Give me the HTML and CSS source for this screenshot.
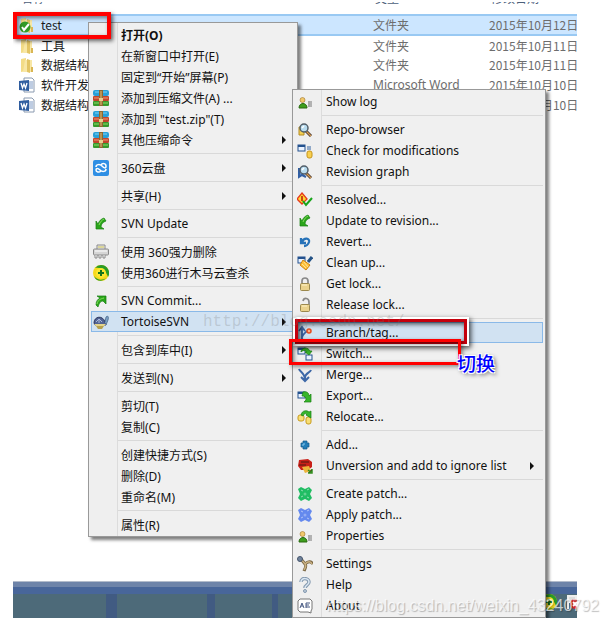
FILE: index.html
```
<!DOCTYPE html>
<html lang="zh-CN">
  <head>
    <meta charset="utf-8">
    <title>TortoiseSVN</title>
    <link rel="stylesheet" href="styles.css">
  </head>
  <body>
    <!-- shared icons -->
    <svg class="sprite" aria-hidden="true">
      <symbol id="folder" viewBox="0 0 16 16">
        <path d="M2 2l5-1v13l-5 1z" fill="#f3dc87"/><path d="M6 3h7v12H4z" fill="#f8e7a6"/><path d="M8 2l3 1v13l-3-1z" fill="#e3c565"/><path d="M12 10h2v5h-2z" fill="#d9b654"/>
      </symbol>
      <symbol id="word" viewBox="0 0 16 16">
        <path d="M5 1h8l2 2v12H5z" fill="#fff" stroke="#8a9ab0"/><path d="M10 5h4M10 7h4M10 9h4M10 11h4" stroke="#7c99c4"/><path d="M0 4l10-1v11L0 13z" fill="#2f5d9f"/><path d="M2 6l1.500 5L5 7l1.500 4L8 6" fill="none" stroke="#fff" stroke-width="1.300"/>
      </symbol>
      <symbol id="books" viewBox="0 0 16 16">
        <rect y="0" width="16" height="6" rx="2" fill="#28a0d8"/><path d="M2 2h12" stroke="#7ed3f3"/><rect y="6" width="16" height="5" rx="1" fill="#c2452c"/><path d="M1 8h14" stroke="#ee9a73"/><rect y="11" width="16" height="5" rx="1" fill="#37992c"/><path d="M1 13h14" stroke="#8fdc67"/><rect x="6" y="0" width="4" height="16" fill="#8f6730"/><path d="M8 1v14" stroke="#e2c179"/><path d="M6 8h4v3H6z" fill="#e7cf8f"/>
      </symbol>
      <symbol id="down" viewBox="0 0 16 16">
        <path d="M3 5v8h8l-3-2c0-3 2-5 5-6l-2-3C8 3 6 5 5 8z" fill="#2ba51b" stroke="#168010" stroke-width=".7"/><path d="M6 9c1-3 3-5 5-6" stroke="#86df5e" fill="none"/>
      </symbol>
      <symbol id="up" viewBox="0 0 16 16">
        <path d="M4 3h9v8l-3-3c-3 0-4 3-5 6l-2-2c0-4 2-6 4-7z" fill="#2ba51b" stroke="#168010" stroke-width=".7"/><path d="M4 11c1-4 3-5 7-6" stroke="#86df5e" fill="none"/>
      </symbol>
      <symbol id="person" viewBox="0 0 16 16">
        <circle cx="5.500" cy="6" r="2.500" fill="#f1c86b" stroke="#9d742b" stroke-width=".6"/><path d="M2 14c0-6 8-6 8 0z" fill="#3e9e1d" stroke="#28690f"/><path d="M11 8h4M11 10h4M11 12h4" stroke="#777"/><path d="M12 7v6" stroke="#999" stroke-width=".6"/>
      </symbol>
      <symbol id="lens" viewBox="0 0 16 16">
        <path d="M9 9l5 5" stroke="#4b3930" stroke-width="3"/><path d="M9 9l5 5" stroke="#d89c4f" stroke-width="1.200"/><circle cx="7" cy="6" r="4" fill="#b9dcef" stroke="#525e68" stroke-width="1.500"/><path d="M5 6l2-2" stroke="#fff" stroke-width="1.500"/>
      </symbol>
      <symbol id="window" viewBox="0 0 16 16">
        <rect x="1" y="2" width="7" height="6" fill="#e9f2ff" stroke="#24528f"/><path d="M1 3h7" stroke="#24528f" stroke-width="2"/>
      </symbol>
      <symbol id="patch" viewBox="0 0 16 16">
        <path d="M1 3l3-2 4 2 4-2 3 3-2 4 2 4-3 3-4-2-4 2-3-3 2-4z" fill="currentColor"/><path d="M4 4l2 1M10 4l2-1M4 11l2-1M10 11l2 1" stroke="#fff" opacity=".5"/><circle cx="8" cy="8" r="1.500" fill="#fff" opacity=".3"/>
      </symbol>
      <symbol id="shield" viewBox="0 0 16 16">
        <circle cx="8" cy="8" r="8" fill="#f6d91d"/><path d="M8 0a8 8 0 0 1 7 12C13 6 9 2 2 3a8 8 0 0 1 6-3z" fill="#2b9c27"/><path d="M1 11c4 5 9 4 12 2-3 4-10 4-12-2z" fill="#2b9c27"/><circle cx="8" cy="8" r="5" fill="#fbe730"/><path d="M8 5v6M5 8h6" stroke="#17751e" stroke-width="2"/>
      </symbol>
    </svg>

    <main class="desktop">
      <table class="files">
        <colgroup><col><col class="col-type"><col class="col-date"></colgroup>
        <thead>
          <tr>
            <th><div class="clip"><span>名称</span></div></th>
            <th><div class="clip"><span>类型</span></div></th>
            <th><div class="clip"><span>修改日期</span></div></th>
          </tr>
        </thead>
        <tbody>
          <tr class="selected">
            <td><div class="name"><svg><use href="#folder"/><circle cx="6" cy="10" r="5.500" fill="#329b25"/><path d="M3 10l2 3 5-6" fill="none" stroke="#fff" stroke-width="2"/></svg>test</div></td>
            <td>文件夹</td>
            <td>2015年10月12日</td>
          </tr>
          <tr>
            <td><div class="name"><svg><use href="#folder"/></svg>工具</div></td>
            <td>文件夹</td>
            <td>2015年10月11日</td>
          </tr>
          <tr>
            <td><div class="name"><svg><use href="#folder"/></svg>数据结构</div></td>
            <td>文件夹</td>
            <td>2015年10月11日</td>
          </tr>
          <tr>
            <td><div class="name"><svg><use href="#word"/></svg>软件开发</div></td>
            <td class="latin">Microsoft Word</td>
            <td>2015年10月10日</td>
          </tr>
          <tr>
            <td><div class="name"><svg><use href="#word"/></svg>数据结构</div></td>
            <td></td>
            <td>2015年10月10日</td>
          </tr>
        </tbody>
      </table>

      <footer class="taskbar">
        <div class="tray">
          <svg viewBox="0 0 16 16"><use href="#shield"/></svg>
          <svg viewBox="0 0 16 16"><path d="M3 1v14M3 2h8v6H3" stroke="#eee" stroke-width="2" fill="#ddd"/><circle cx="10" cy="10" r="5" fill="#d22d2d"/><path d="M8 8l4 4M12 8l-4 4" stroke="#fff" stroke-width="2"/></svg>
        </div>
      </footer>

      <div class="menu context" role="menu">
        <button class="default"><i></i>打开(O)</button>
        <button><i></i>在新窗口中打开(E)</button>
        <button><i></i>固定到“开始”屏幕(P)</button>
        <button><svg><use href="#books"/></svg>添加到压缩文件(A) ...</button>
        <button><svg><use href="#books"/></svg>添加到 "test.zip"(T)</button>
        <button class="more"><svg><use href="#books"/></svg>其他压缩命令</button>
        <hr>
        <button class="more"><svg viewBox="0 0 16 16"><rect width="16" height="16" rx="2" fill="#2f8fe4"/><path d="M13 9c0 3-4 3-6 1C5 8 3 8 3 10s3 3 5 1M3 7c0-3 4-3 6-1 2 2 4 3 4 0s-4-3-5-1" fill="none" stroke="#fff" stroke-width="1.500"/></svg>360云盘</button>
        <hr>
        <button class="more"><i></i>共享(H)</button>
        <hr>
        <button><svg><use href="#down"/></svg>SVN Update</button>
        <hr>
        <button><svg viewBox="0 0 16 16"><path d="M4 5V1h8v4" fill="#eee" stroke="#888"/><path d="M5 3h6" stroke="#c9bf45"/><rect x=".5" y="5" width="15" height="6" rx="1" fill="#d5d5d5" stroke="#888"/><path d="M2 7h12" stroke="#fff"/><path d="M2 11v3h2v-3M6 11v3h2v-3M10 11v3h2v-3" fill="#fff" stroke="#888"/></svg>使用 360强力删除</button>
        <button><svg><use href="#shield"/></svg>使用360进行木马云查杀</button>
        <hr>
        <button><svg><use href="#up"/></svg>SVN Commit...</button>
        <button class="more active"><svg viewBox="0 0 16 16"><path d="M1 9c0-7 9-8 11-1l1 3H2z" fill="#526494" stroke="#2b355d"/><path d="M3 8l3-3 3 3M6 5v4" stroke="#a9b8da" fill="none"/><path d="M12 8l1-5c2-2 3 0 2 3l-2 5" fill="#7da2c6" stroke="#3c5a80" stroke-width=".7"/><path d="M1 10h12l-2 2H3z" fill="#e3d38b"/><path d="M3 12h8l-2 3H5z" fill="#b6a14e"/></svg>TortoiseSVN</button>
        <hr>
        <button class="more"><i></i>包含到库中(I)</button>
        <hr>
        <button class="more"><i></i>发送到(N)</button>
        <hr>
        <button><i></i>剪切(T)</button>
        <button><i></i>复制(C)</button>
        <hr>
        <button><i></i>创建快捷方式(S)</button>
        <button><i></i>删除(D)</button>
        <button><i></i>重命名(M)</button>
        <hr>
        <button><i></i>属性(R)</button>
      </div>

      <div class="menu svn" role="menu">
        <button><svg><use href="#person"/></svg>Show log</button>
        <hr>
        <button><svg><path d="M2 5h5v8H2z" fill="#f2ce55" stroke="#b58c20"/><use href="#lens"/></svg>Repo-browser</button>
        <button><svg viewBox="0 0 16 16"><use href="#window"/><path d="M10 4h4M10 6h4" stroke="#3564a2"/><rect x="10" y="8" width="5" height="7" rx="2" fill="#f8cf4f" stroke="#c6951b"/></svg>Check for modifications</button>
        <button><svg><path d="M2 4v9l3-2 4 2" fill="#5f8dcb" stroke="#315fa4" stroke-width="2"/><use href="#lens"/></svg>Revision graph</button>
        <hr>
        <button><svg viewBox="0 0 16 16"><path d="M5 1l5 6-5 5-5-5z" fill="#ffd632" stroke="#e7391c" stroke-width="1.300"/><path d="M5 4v5" stroke="#b51a0b" stroke-width="1.500"/><path d="M6 9l3 4 6-7" fill="none" stroke="#18a51b" stroke-width="2"/></svg>Resolved...</button>
        <button><svg><use href="#down"/></svg>Update to revision...</button>
        <button><svg viewBox="0 0 16 16"><path d="M4 4v5h5M5 8c2-5 8-4 7 0-1 3-2 4-5 4" fill="none" stroke="#2772b8" stroke-width="2.300"/></svg>Revert...</button>
        <button><svg viewBox="0 0 16 16"><use href="#window"/><path d="M15 2l-4 5" stroke="#245386" stroke-width="3"/><path d="M6 5l7 5-4 5-6-5z" fill="#ffc13a" stroke="#d08411"/><path d="M5 9l4 4M7 7l4 5" stroke="#ffe395"/></svg>Clean up...</button>
        <button><svg viewBox="0 0 16 16"><path d="M5 8V5c0-4 6-4 6 0v3" fill="none" stroke="#888" stroke-width="1.700"/><rect x="3.500" y="7.500" width="9" height="7" rx="1" fill="#ead28c" stroke="#9b884d"/><path d="M5 9h5" stroke="#fff4ca"/></svg>Get lock...</button>
        <button><svg viewBox="0 0 16 16"><path d="M6 4c1-4 6-3 6 1v3" fill="none" stroke="#888" stroke-width="1.700"/><rect x="3.500" y="7.500" width="9" height="7" rx="1" fill="#ead28c" stroke="#9b884d"/><path d="M5 9h5" stroke="#fff4ca"/></svg>Release lock...</button>
        <hr>
        <button class="active"><svg viewBox="0 0 16 16"><path d="M5 14V3M2 6l3-4 3 4M5 12c1-3 3-4 5-6" fill="none" stroke="#3862a3" stroke-width="1.800"/><circle cx="12" cy="6" r="2" fill="#ffb385" stroke="#e54d1f" stroke-width="1.500"/></svg>Branch/tag...</button>
        <button><svg viewBox="0 0 16 16"><use href="#window"/><rect x="9" y="9" width="6" height="5" fill="#e9f2ff" stroke="#24528f"/><path d="M4 5c2-4 7-4 9 0h2l-3 4-4-3h2C8 4 6 4 4 6z" fill="#37b52b" stroke="#17800f" stroke-width=".7"/></svg>Switch...</button>
        <button><svg viewBox="0 0 16 16"><path d="M2 2c1 3 6 4 6 11M14 3c-1 3-6 3-6 8M4 10l4 4 4-4" fill="none" stroke="#3d68a8" stroke-width="2"/></svg>Merge...</button>
        <button><svg viewBox="0 0 16 16"><rect x="1" y="4" width="7" height="6" fill="#e9f2ff" stroke="#24528f"/><path d="M1 5h7" stroke="#24528f" stroke-width="2"/><path d="M6 4c4-1 6 1 6 4l2-2v8H7l2-2c0-3-1-4-4-4z" fill="#37b52b" stroke="#17800f" stroke-width=".7"/></svg>Export...</button>
        <button><svg viewBox="0 0 16 16"><rect x="1" y="6" width="6" height="6" rx="2" fill="#f8df75" stroke="#c89b1d"/><rect x="9" y="8" width="5" height="7" rx="2" fill="#f8df75" stroke="#c89b1d"/><path d="M4 6c1-5 6-5 8-3l2-1v7l-5-3 1-1C8 4 7 5 6 7z" fill="#37b52b" stroke="#17800f" stroke-width=".7"/></svg>Relocate...</button>
        <hr>
        <button><svg viewBox="0 0 16 16"><path d="M6 4h4v2h2v4h-2v2H6v-2H4V6h2z" fill="#247eb8" stroke="#16598b" stroke-width=".7"/><path d="M7 6v2H5" stroke="#87c7ed" fill="none"/></svg>Add...</button>
        <button class="more"><svg viewBox="0 0 16 16"><path d="M2 2l9-1 4 3v5l-4 3H4l-3-4z" fill="#c82018"/><path d="M4 4h8M2 7h7" stroke="#4b1d12"/><path d="M5 9l7-1 2 5-6 2z" fill="#ecb43c"/><path d="M11 12l4 3M15 11v4h-4" stroke="#368e21" stroke-width="1.500"/></svg>Unversion and add to ignore list</button>
        <hr>
        <button><svg class="green"><use href="#patch"/></svg>Create patch...</button>
        <button><svg class="blue"><use href="#patch"/></svg>Apply patch...</button>
        <button><svg><use href="#person"/></svg>Properties</button>
        <hr>
        <button><svg viewBox="0 0 16 16"><path d="M4 3l4 5c3-3 6-3 8 0M8 8c2 2 0 4-1 7" fill="none" stroke="#77633f" stroke-width="3"/><path d="M4 3l4 5c3-3 6-3 7 0M8 8c2 2 0 4-1 6" fill="none" stroke="#c9b183" stroke-width="1.500"/><circle cx="3" cy="3" r="2.500" fill="#71839c" stroke="#46566d"/></svg>Settings</button>
        <button><svg viewBox="0 0 16 16"><path d="M4 5c0-5 8-4 8 0 0 3-4 3-4 6" fill="none" stroke="#8499af" stroke-width="3.500"/><path d="M4 5c0-5 8-4 8 0 0 3-4 3-4 6" fill="none" stroke="#dce8f3" stroke-width="1.500"/><circle cx="8" cy="14" r="1.500" fill="#bdccdc" stroke="#8499af"/></svg>Help</button>
        <button><svg viewBox="0 0 16 16"><path d="M3 1h10l2 2v8l-1 2v2l-3-1H3l-2-2V3z" fill="#fff" stroke="#777"/><path d="M3 10l2-5 2 5M4 8h2M9 5h4M9 7h3M9 9h4M9 5v5" fill="none" stroke="#465982"/></svg>About</button>
      </div>

      <div class="mark mark-folder"></div>
      <div class="mark mark-branch"></div>
      <div class="mark mark-switch"></div>
      <span class="note">切换</span>
      <span class="watermark-old">http://blog.csdn.net/</span>
    </main>
    <span class="watermark">https://blog.csdn.net/weixin_43240792</span>
  </body>
</html>
```

FILE: styles.css
```
* {
  box-sizing: border-box;
}
body {
  margin: 0;
  padding: 0 31px 6px 13px;
  min-height: 100vh;
  position: relative;
  overflow: hidden;
  background: #fff;
  font-family: "Noto Sans CJK SC", sans-serif;
  font-size: 12px;
  display: flex;
}
.sprite {
  display: none;
}
.desktop {
  flex: 1;
  position: relative;
  overflow: hidden;
  display: flex;
  flex-direction: column;
  justify-content: space-between;
}

/* file list */
.files {
  width: 100%;
  table-layout: fixed;
  border-collapse: collapse;
  white-space: nowrap;
  color: #6d6d6d;
}
.col-type {
  width: 116px;
}
.col-date {
  width: 94px;
}
.files th {
  height: 15px;
  padding: 2px 0 0 8px;
  vertical-align: top;
  text-align: left;
  font-weight: normal;
  line-height: 12px;
  color: #4c607a;
}
.clip {
  height: 2px;
  overflow: hidden;
  display: flex;
  align-items: flex-end;
}
.files td {
  height: 20px;
  padding: 0 0 0 6px;
  line-height: 16px;
  overflow: hidden;
}
.selected td {
  background: #cce6ff;
  border-top: 2px solid #99c9f3;
  border-bottom: 2px solid #99c9f3;
}
.name {
  display: flex;
  align-items: center;
  gap: 6px;
  color: #1a1a1a;
}
svg, i {
  width: 16px;
  height: 16px;
  flex: none;
}
.latin {
  font-family: "Noto Sans", sans-serif;
}

/* menus */
.menu {
  position: absolute;
  padding: 1px 2px;
  border: 1px solid #999;
  background: linear-gradient(to right, #efefef 28px, #dcdcdc 28px, #dcdcdc 29px, #f0f0f0 29px);
  box-shadow: 3px 3px 3px rgba(0, 0, 0, 0.5);
}
.context {
  left: 75px;
  top: 22px;
  width: 210px;
}
.svn {
  left: 279px;
  top: 89px;
  width: 254px;
}
.menu button {
  width: 100%;
  height: 21px;
  display: flex;
  align-items: center;
  gap: 12px;
  padding: 0 1px;
  border: 1px solid transparent;
  background: none;
  font-family: "Noto Sans", "Noto Sans CJK SC", sans-serif;
  font-size: 12px;
  color: #111;
  text-align: left;
  white-space: nowrap;
}
.svn button {
  gap: 13px;
}
.menu .default {
  font-weight: bold;
}
.menu .active {
  background: #d1e2f2;
  border-color: #8ab9e8;
}
.more::after {
  content: "";
  margin-left: auto;
  margin-right: 7px;
  border: 4px solid transparent;
  border-left-color: #111;
  border-right-width: 0;
}
.menu hr {
  height: 1px;
  margin: 3px 0 3px 27px;
  border: 0;
  background: #d9d9d9;
}
.green {
  color: #20bd63;
}
.blue {
  color: #6489ee;
}

/* taskbar */
.taskbar {
  height: 37px;
  padding-top: 12px;
  border-top: 1px solid #b3bccb;
  background:
    linear-gradient(#6e84a9 5px, #48669a 5px, #48669a 12px, transparent 12px),
    linear-gradient(to right, transparent 93px, #415b82 93px, #415b82 104px, transparent 104px, transparent 194px, #415b82 194px, #415b82 202px, transparent 202px, transparent 259px, #415b82 259px, #415b82 265px, transparent 265px),
    #4d6a79;
}
.tray {
  display: flex;
  justify-content: flex-end;
  gap: 8px;
  margin-right: -4px;
}

/* annotations */
.mark {
  position: absolute;
  border: 4px solid #f00;
}
.mark-folder {
  left: 0;
  top: 12px;
  width: 98px;
  height: 27px;
  box-shadow: 2px 2px 4px rgba(0, 0, 0, 0.6), inset 2px 2px 4px rgba(0, 0, 0, 0.5);
}
.mark-branch {
  left: 282px;
  top: 319px;
  width: 172px;
  height: 25px;
  border: 3px solid #c4000c;
  box-shadow: 0 0 0 2px #fff, 2px 2px 5px 2px rgba(0, 0, 0, 0.7), inset 2px 2px 5px rgba(0, 0, 0, 0.7);
}
.mark-switch {
  left: 276px;
  top: 339px;
  width: 172px;
  height: 26px;
  border-width: 3px;
  box-shadow: 2px 2px 4px rgba(0, 0, 0, 0.4), inset 2px 2px 4px rgba(0, 0, 0, 0.5);
}
.note {
  position: absolute;
  left: 444px;
  top: 350px;
  font-size: 19px;
  font-weight: 500;
  line-height: 26px;
  color: #00f;
  text-shadow: 1px 1px #fff, -1px -1px #fff, 1px -1px #fff, -1px 1px #fff, 2px 2px 4px #333;
}
.watermark-old {
  position: absolute;
  left: 190px;
  top: 312px;
  font-family: "Liberation Mono", monospace;
  font-size: 16px;
  line-height: 20px;
  color: rgba(120, 120, 120, 0.25);
}
.watermark {
  position: absolute;
  right: 9px;
  bottom: 8px;
  font-family: "Liberation Sans", sans-serif;
  font-size: 16px;
  line-height: 20px;
  color: rgba(255, 255, 255, 0.7);
  text-shadow: 1px 1px 1px rgba(0, 0, 0, 0.25);
}
```
